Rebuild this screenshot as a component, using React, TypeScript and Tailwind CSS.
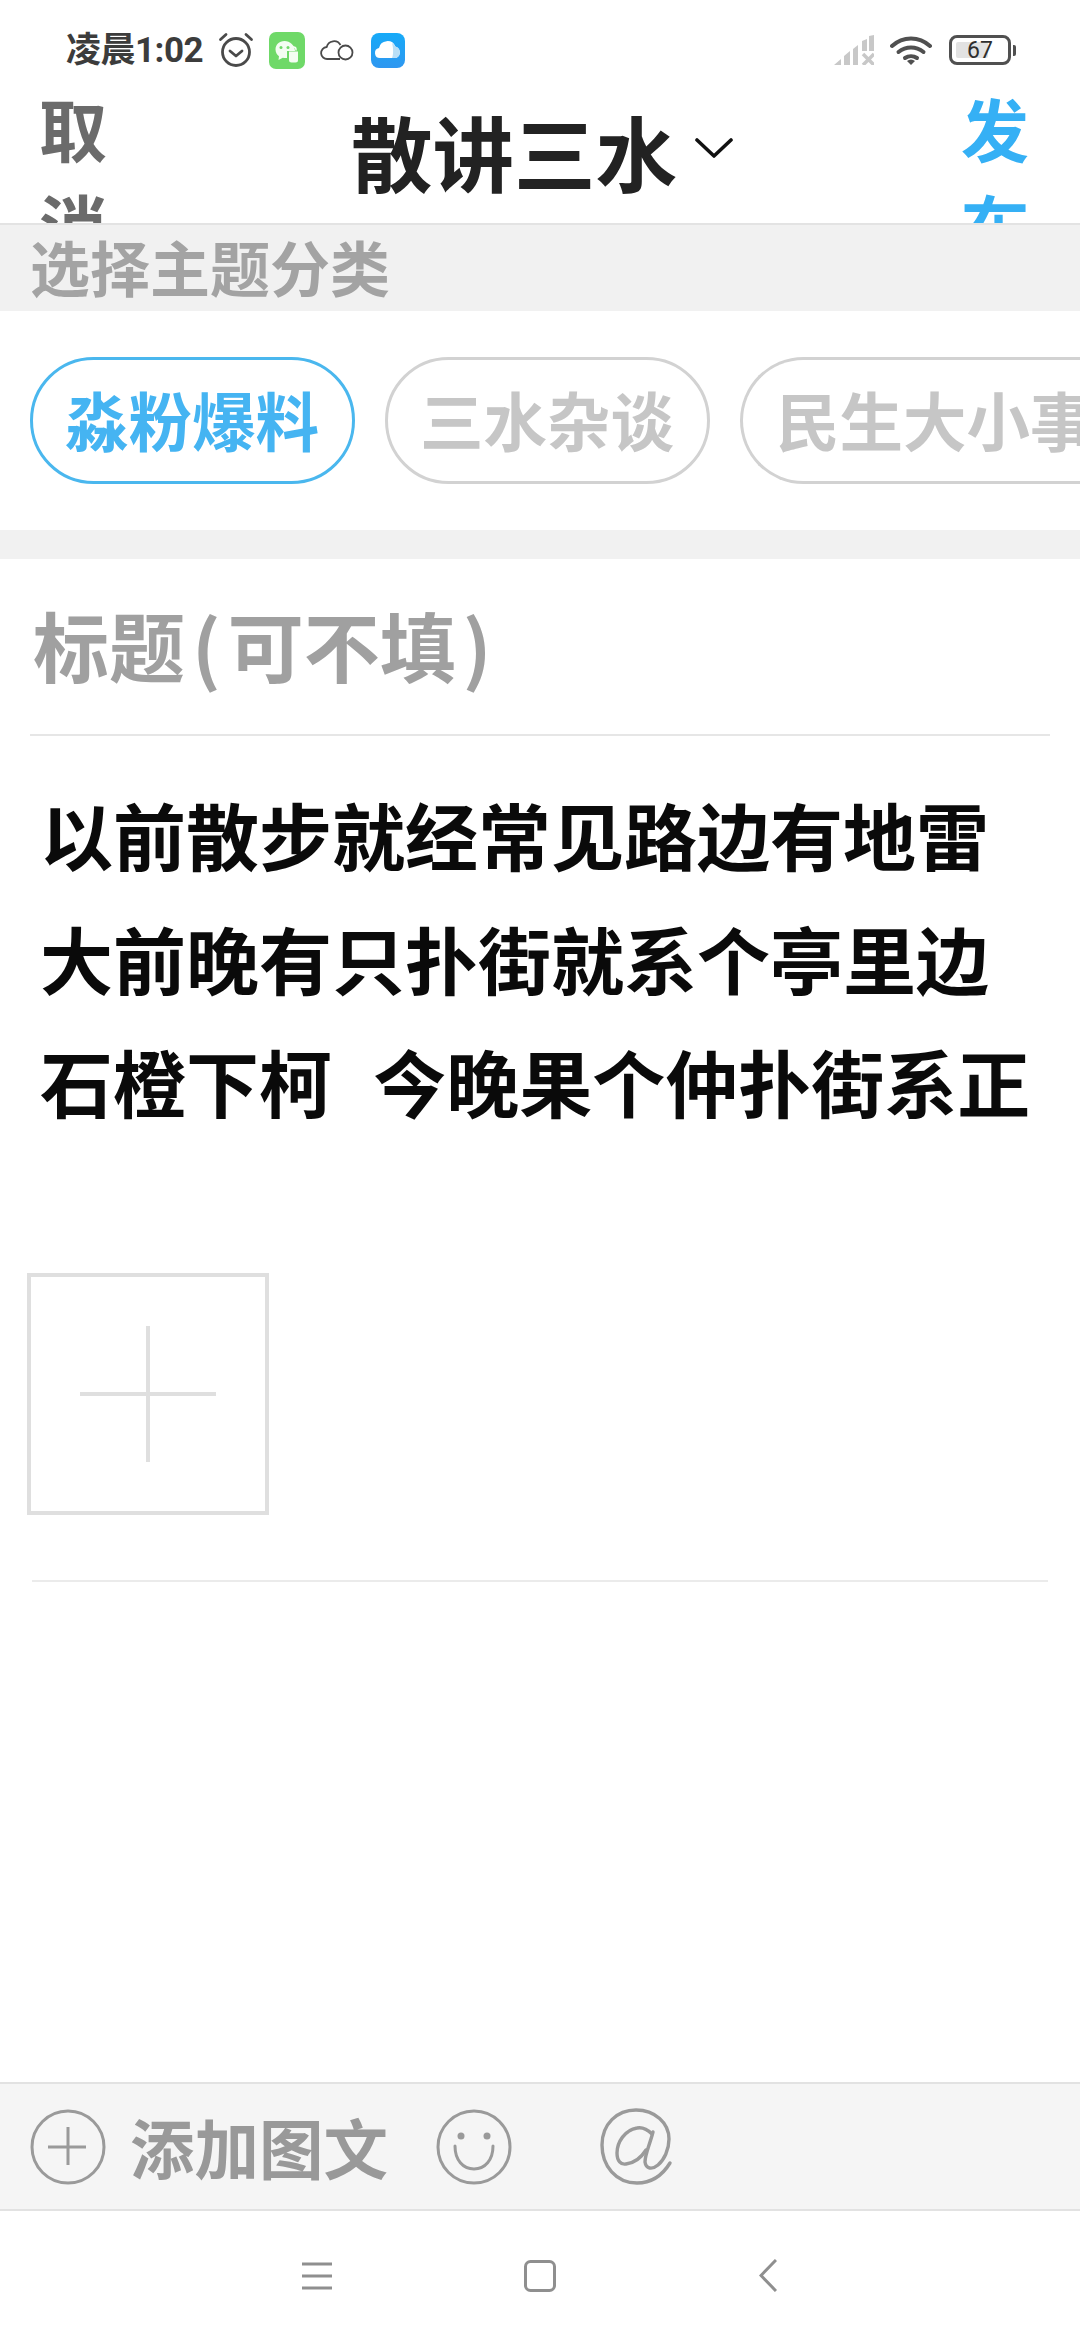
const cjk = "font-['Noto_Sans_CJK_SC','Noto_Sans',sans-serif]";

function Chip({ label, active }: { label: string; active?: boolean }) {
  return (
    <div
      className={`h-[127px] w-[325px] shrink-0 rounded-[64px] border-[3px] flex items-center overflow-hidden whitespace-nowrap pl-[32px] text-[63.500px] font-bold leading-none pb-[3px] ${
        active ? "border-[#4ab7ee] text-[#45b4f2]" : "border-[#d2d2d2] text-[#c6c6c6]"
      }`}
    >
      {label}
    </div>
  );
}

function StatusBar() {
  return (
    <div className="h-[98px] pt-[30px] pl-[66px] pr-[64px] flex items-start justify-between">
      <div className="flex items-center h-[40px]">
        <span className="text-[35px] font-bold text-[#3c3c3c] leading-none w-[136px] whitespace-nowrap tracking-[-0.5px] font-['Roboto','Noto_Sans_CJK_SC',sans-serif]">凌晨1:02</span>
        <svg className="ml-[16px]" width="36" height="36" viewBox="0 0 36 36" fill="none" stroke="#4a4a4a" strokeWidth="2.800" strokeLinecap="round" strokeLinejoin="round">
          <circle cx="18" cy="20" r="13.500" />
          <path d="M12 19l6 5 6-5" />
          <path d="M2.500 7.500l5.500-5M33.500 7.500l-5.500-5" />
        </svg>
        <svg className="ml-[15px]" width="36" height="37" viewBox="0 0 36 37">
          <rect width="36" height="37" rx="7" fill="#6fd968" />
          <path d="M15.500 9C10 9 6.500 13 6.500 17.500c0 3 1.500 5.300 3.500 6.800L9.500 28l4.300-2.300c1.300.3 2.700.4 4.200.3V19h8C26 13.500 21 9 15.500 9z" fill="#f4fdf2" />
          <path d="M20 19.500h9v8.500a2.500 2.500 0 0 1-2.500 2.500h-4A2.500 2.500 0 0 1 20 28z" fill="#f4fdf2" />
          <path d="M22 18.500v-1a2.500 2.500 0 0 1 5 0v1" fill="none" stroke="#f4fdf2" strokeWidth="1.500" />
          <circle cx="12" cy="15.500" r="1.500" fill="#6fd968" />
          <circle cx="19" cy="15.500" r="1.500" fill="#6fd968" />
        </svg>
        <svg className="ml-[15px]" width="34" height="24" viewBox="0 0 34 24" fill="none" stroke="#4a4a4a" strokeWidth="1.800">
          <path d="M20 21H7.500a6 6 0 0 1-.8-12A7.500 7.500 0 0 1 20.500 7" />
          <circle cx="25.500" cy="14.500" r="7" />
        </svg>
        <svg className="ml-[17px]" width="34" height="35" viewBox="0 0 34 35">
          <defs>
            <linearGradient id="bc" x1="0" y1="0" x2="0" y2="1">
              <stop offset="0" stopColor="#16aaf8" />
              <stop offset="1" stopColor="#2f97f0" />
            </linearGradient>
          </defs>
          <rect width="34" height="35" rx="8" fill="url(#bc)" />
          <path d="M9 25a5 5 0 0 1-1-9.900 8.500 8.500 0 0 1 16.300-1.500A6 6 0 0 1 25 25z" fill="#fff" />
          <path d="M21 25c1.500-3 1.500-10 0-15a8.500 8.500 0 0 1 3.300 3.600A6 6 0 0 1 25 25z" fill="#b9dff7" />
        </svg>
      </div>
      <div className="flex items-center h-[40px]">
        <svg width="40" height="30" viewBox="0 0 40 30" fill="#c8c8c8">
          <path d="M0 30l7-6v6zM10 21l6-5v14h-6zM19 14l5-4v20h-5zM28 6l5-2v12h-5zM35 1l5-1v16h-5z" />
          <path d="M29 19l11 11M40 19L29 30" stroke="#c8c8c8" strokeWidth="3.500" fill="none" />
        </svg>
        <svg className="ml-[16px]" width="42" height="30" viewBox="0 0 42 30" fill="none" stroke="#505050" strokeWidth="4" strokeLinecap="round">
          <path d="M2 11c11-10 27-10 38 0" />
          <path d="M8.500 17c7.500-6 17.500-6 25 0" />
          <path d="M15 23c3.500-2.500 8.500-2.500 12 0" />
          <path d="M21 30l-4-4a6 6 0 0 1 8 0z" fill="#505050" stroke="none" />
        </svg>
        <div className="ml-[17px] w-[62px] h-[30px] rounded-[8px] border-[3px] border-[#505050] flex items-center p-[4px] relative">
          <div className="h-full w-[67%] bg-[#e2e2e2] rounded-[2px]" />
          <span className="absolute inset-0 flex items-center justify-center text-[23px] text-[#2e2e2e] leading-none font-['Roboto',sans-serif]">67</span>
        </div>
        <div className="ml-[2px] w-[3px] h-[11px] rounded-r-[2px] bg-[#505050]" />
      </div>
    </div>
  );
}

function Header() {
  return (
    <div className="h-[127px] border-b-[2px] border-[#e3e3e3] overflow-hidden flex items-start pl-[39px] pr-[51px] justify-between">
      <div className="w-[68px] mt-[-18px] text-[68px] leading-[96px] font-bold text-[#6b6b6b]">取消</div>
      <div className="flex items-center mt-[6px] ml-[16px] text-[#222]">
        <span className="text-[81.500px] leading-[92px] font-bold whitespace-nowrap">散讲三水</span>
        <svg className="ml-[18px] mt-[-4px]" width="38" height="22" viewBox="0 0 38 22" fill="none" stroke="#111" strokeWidth="3.600" strokeLinecap="round" strokeLinejoin="round">
          <path d="M2 3l17 16L36 3" />
        </svg>
      </div>
      <div className="w-[68px] mt-[-18px] text-[68px] leading-[96px] font-bold text-[#35b0f5]">发布</div>
    </div>
  );
}

function BottomBar() {
  return (
    <div className="h-[129px] bg-[#f5f5f5] border-y-[2px] border-[#e2e2e2] flex items-center pl-[30px] text-[#999]">
      <svg width="76" height="76" viewBox="0 0 76 76" fill="none" stroke="#9a9a9a" strokeWidth="3">
        <circle cx="38" cy="38" r="36" />
        <path d="M18 38h38M38 18v38" />
      </svg>
      <span className="ml-[24px] text-[64.500px] font-bold leading-none whitespace-nowrap">添加图文</span>
      <svg className="ml-[48px]" width="76" height="76" viewBox="0 0 76 76" fill="none" stroke="#9a9a9a" strokeWidth="3">
        <circle cx="38" cy="38" r="36" />
        <circle cx="25" cy="27" r="3.500" fill="#9a9a9a" stroke="none" />
        <circle cx="51" cy="27" r="3.500" fill="#9a9a9a" stroke="none" />
        <path d="M19 37c0 14 8 23 19 23s19-9 19-23" strokeLinecap="round" />
      </svg>
      <svg className="ml-[88px]" width="74" height="78" viewBox="0 0 74 78" fill="none" stroke="#9a9a9a" strokeWidth="3.400" strokeLinecap="round">
        <path d="M70 55C62 68 50 75 37 75C16 75 2 58 2 37C2 16 17 2 36 2C55 2 69 15 69 31C69 42 64 52 58 57C52 62 46 61 45 54C45 46 50 36 53 24" />
        <path d="M52 26C47 21 42 19 37 20C25 22 17 34 17 45C17 53 21 57 26 56C34 55 41 50 46 42" />
      </svg>
    </div>
  );
}

function NavBar() {
  return (
    <div className="h-[129px] flex items-center justify-center">
      <div className="flex items-center gap-[192px] ml-[-2px]">
        <svg width="30" height="28" viewBox="0 0 30 28" stroke="#8f8f8f" strokeWidth="3">
          <path d="M0 2h30M0 14h30M0 26h30" />
        </svg>
        <svg width="32" height="32" viewBox="0 0 32 32" fill="none" stroke="#8f8f8f" strokeWidth="3">
          <rect x="1.500" y="1.500" width="29" height="29" rx="5" />
        </svg>
        <svg className="ml-[11px]" width="18" height="33" viewBox="0 0 18 33" fill="none" stroke="#8f8f8f" strokeWidth="3">
          <path d="M17 1L2 16.500 17 32" />
        </svg>
      </div>
    </div>
  );
}

export default function App() {
  return (
    <div className={`w-[1080px] h-[2340px] bg-white flex flex-col overflow-hidden ${cjk}`}>
      <StatusBar />
      <Header />
      <div className="h-[86px] bg-[#f1f1f1] pl-[30px] pb-[4px] flex items-center text-[60px] font-bold text-[#a3a3a3] leading-none whitespace-nowrap">选择主题分类</div>
      <div className="h-[219px] pt-[46px] pl-[30px] flex gap-[30px] overflow-hidden">
        <Chip label="淼粉爆料" active />
        <Chip label="三水杂谈" />
        <div className="h-[127px] w-[400px] shrink-0 rounded-l-[64px] border-[3px] border-r-0 border-[#d2d2d2] flex items-center overflow-hidden whitespace-nowrap pl-[33px] pb-[3px] text-[63.500px] font-bold leading-none text-[#c6c6c6]">民生大小事</div>
      </div>
      <div className="h-[29px] bg-[#f1f1f1]" />
      <div className="h-[177px] mx-[30px] border-b-[2px] border-[#e6e6e6] flex items-center pb-[6px] text-[76px] font-bold text-[#a0a0a0] leading-none whitespace-nowrap">
        <span className="ml-[3px]">标题<span className="mx-[7px]">(</span>可不填<span className="mx-[7px]">)</span></span>
      </div>
      <div className="pt-[36px] pl-[40px] text-[73px] font-bold leading-[123.500px] text-[#0a0a0a] whitespace-pre [word-spacing:4px] h-[537px]">
        <div>以前散步就经常见路边有地雷</div>
        <div>大前晚有只扑街就系个亭里边</div>
        <div>石橙下柯  今晚果个仲扑街系正</div>
      </div>
      <div className="mx-[27px] w-[242px] h-[242px] border-[4px] border-[#dfdfdf] flex items-center justify-center">
        <svg width="136" height="136" viewBox="0 0 136 136" stroke="#dfdfdf" strokeWidth="4">
          <path d="M0 68h136M68 0v136" />
        </svg>
      </div>
      <div className="h-[2px] bg-[#ebebeb] mx-[32px] mt-[65px]" />
      <div className="flex-1" />
      <BottomBar />
      <NavBar />
    </div>
  );
}
